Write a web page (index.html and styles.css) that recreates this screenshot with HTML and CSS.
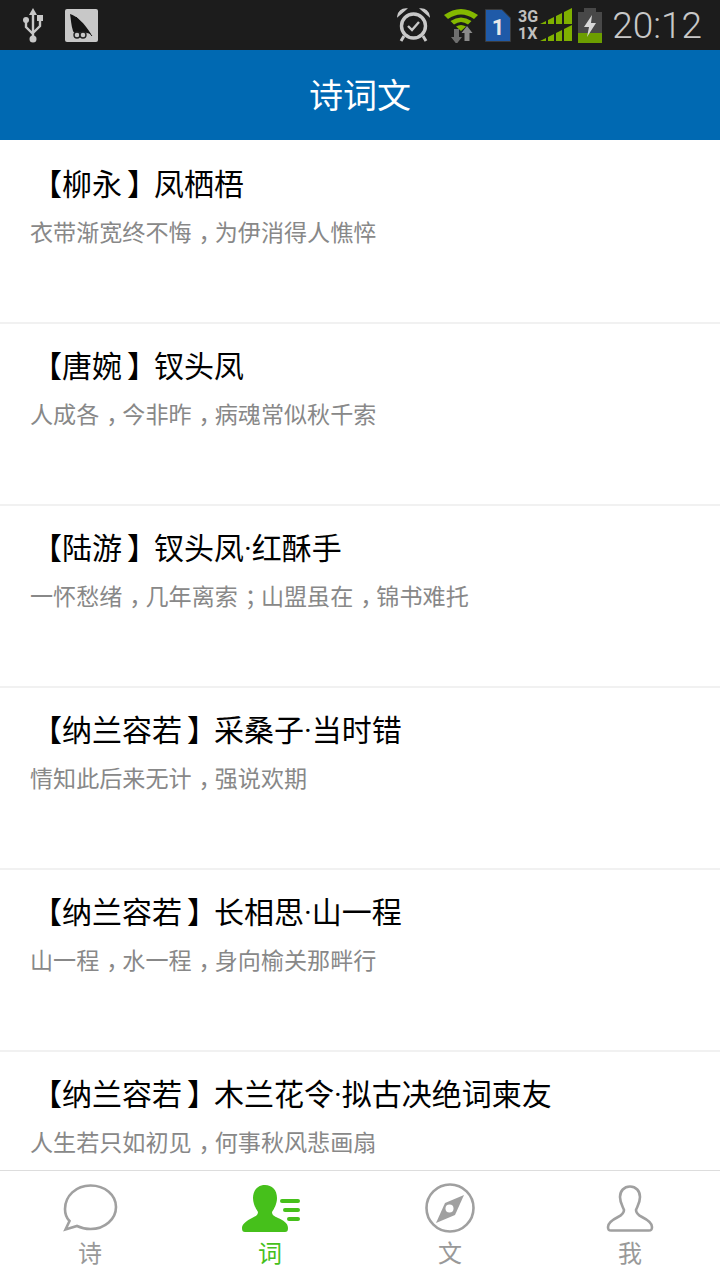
FILE: index.html
```html
<!DOCTYPE html>
<html lang="zh-CN">
<head>
    <meta charset="UTF-8">
    <meta name="viewport" content="width=device-width, initial-scale=1.0">
    <title>诗词文</title>
    <link rel="stylesheet" href="styles.css">
</head>
<body>
<div class="phone">

    <!-- Status bar -->
    <div class="status-bar">
        <div class="status-left">
            <svg class="icon-usb" width="24" height="36" viewBox="0 0 24 36">
                <path d="M11 1l-4 7h8z" fill="#c8c8c8"/>
                <path d="M11 7v25M4 13v7l7 7M18 11v8l-7 7" fill="none" stroke="#c8c8c8" stroke-width="2.4"/>
                <circle cx="11" cy="32" r="3.5" fill="#c8c8c8"/>
                <circle cx="4" cy="13" r="3" fill="#c8c8c8"/>
                <rect x="15" y="8" width="6" height="6" fill="#c8c8c8"/>
            </svg>
            <svg class="icon-note" width="33" height="33" viewBox="0 0 33 33">
                <rect width="33" height="33" rx="2" fill="#c8c8c8"/>
                <path d="M5 5C12 7 19 14 26 25L18 23C14 24 9 25 8 22C6 16 6 10 5 5Z" fill="#151515"/>
                <path d="M11 8L27 27" stroke="#151515" stroke-width="1"/>
                <circle cx="12" cy="26" r="3" fill="#c8c8c8" stroke="#222" stroke-width="1.4"/>
                <circle cx="18" cy="26" r="3" fill="#c8c8c8" stroke="#222" stroke-width="1.4"/>
            </svg>
        </div>
        <div class="status-right">
            <svg class="icon-alarm" width="33" height="35" viewBox="0 0 33 35">
                <circle cx="16.500" cy="18" r="12" fill="none" stroke="#c8c8c8" stroke-width="3.4"/>
                <path d="M1 8C2 3 5 1 9 1zM32 8C31 3 28 1 24 1z" fill="#c8c8c8" stroke="#c8c8c8" stroke-width="1.500"/>
                <path d="M11 18l4 4 7-8" fill="none" stroke="#c8c8c8" stroke-width="2.400"/>
                <path d="M7 28l-3 5M26 28l3 5" stroke="#c8c8c8" stroke-width="3"/>
            </svg>
            <svg class="icon-wifi" width="36" height="36" viewBox="0 0 36 36">
                <path d="M0 8Q17 -4 34 8L30 12Q17 3 4 12Z" fill="#84b800"/>
                <path d="M6.500 14Q17 7 27.500 14L24 17.500Q17 12.500 10 17.500Z" fill="#84b800"/>
                <path d="M12 19.500Q17 16.500 22 19.500L17 24Z" fill="#84b800"/>
                <path d="M10 22h5v8h3l-5.500 7-5.500-7h3z" fill="#6f6f6f"/>
                <path d="M23 19l5.500 7h-3v8h-5v-8h-3z" fill="#8a8a8a"/>
            </svg>
            <svg class="icon-sim" width="26" height="33" viewBox="0 0 26 33">
                <path d="M0.500 0.500H17L25.500 9V32.500H0.500z" fill="#1f5aa8" stroke="#3b3b3b"/>
                <text x="13" y="26" class="sim-num">1</text>
            </svg>
            <div class="net-type"><span>3G</span><span>1X</span></div>
            <svg class="icon-signal" width="32" height="34" viewBox="0 0 32 34">
                <path d="M0 16L6 13V16zM8 12L14 9V16H8zM16 8L22 5V16H16zM24 4L32 0V16H24z" fill="#7fb000"/>
                <path d="M0 33L6 30V33zM8 29L14 26V33H8zM16 25L22 22V33H16zM24 21L32 17V33H24z" fill="#7fb000"/>
            </svg>
            <svg class="icon-battery" width="24" height="35" viewBox="0 0 24 35">
                <rect x="6" y="0" width="12" height="4" fill="#484848"/>
                <rect x="0" y="4" width="24" height="21" fill="#484848"/>
                <rect x="0" y="25" width="24" height="10" fill="#6c9e00"/>
                <path d="M14 7L6 19H11L9 29L18 15H13z" fill="#d8d8d8"/>
            </svg>
            <span class="clock">20:12</span>
        </div>
    </div>

    <!-- Header -->
    <div class="header">诗词文</div>

    <!-- Poem list -->
    <div class="poem-list">
        <div class="poem">
            <h3><span class="bracket">【</span>柳永<span class="bracket-end">】</span>凤栖梧</h3>
            <p>衣带渐宽终不悔<span class="mark">，</span>为伊消得人憔悴</p>
        </div>
        <div class="poem">
            <h3><span class="bracket">【</span>唐婉<span class="bracket-end">】</span>钗头凤</h3>
            <p>人成各<span class="mark">，</span>今非昨<span class="mark">，</span>病魂常似秋千索</p>
        </div>
        <div class="poem">
            <h3><span class="bracket">【</span>陆游<span class="bracket-end">】</span>钗头凤·红酥手</h3>
            <p>一怀愁绪<span class="mark">，</span>几年离索<span class="mark">；</span>山盟虽在<span class="mark">，</span>锦书难托</p>
        </div>
        <div class="poem">
            <h3><span class="bracket">【</span>纳兰容若<span class="bracket-end">】</span>采桑子·当时错</h3>
            <p>情知此后来无计<span class="mark">，</span>强说欢期</p>
        </div>
        <div class="poem">
            <h3><span class="bracket">【</span>纳兰容若<span class="bracket-end">】</span>长相思·山一程</h3>
            <p>山一程<span class="mark">，</span>水一程<span class="mark">，</span>身向榆关那畔行</p>
        </div>
        <div class="poem">
            <h3><span class="bracket">【</span>纳兰容若<span class="bracket-end">】</span>木兰花令·拟古决绝词柬友</h3>
            <p>人生若只如初见<span class="mark">，</span>何事秋风悲画扇</p>
        </div>
    </div>

    <!-- Tab bar -->
    <div class="tab-bar">
        <div class="tab">
            <svg width="60" height="52" viewBox="0 0 60 52">
                <path d="M5.500 47.500L9.500 39C6 35.500 5 31 5 27C5 14 16 3.500 30.500 3.500C45 3.500 56 13 56 25C56 37 45 47 30.500 47C25 47 21 46 17 44Z" fill="none" stroke="#a0a0a0" stroke-width="2.600"/>
            </svg>
            <span>诗</span>
        </div>
        <div class="tab active">
            <svg width="60" height="52" viewBox="0 0 60 52">
                <path d="M25 3C32 3 37 8 37 16C37 22 34 27 32 30C32 33 34 34 38 36C43 38 48 41 48 46C48 49 47 50 45 50L5 50C3 50 2 49 2 46C2 42 7 38.500 12 36C16 34 18 33 18 30C16 27 13 22 13 16C13 8 18 3 25 3Z" fill="#46c01b"/>
                <rect x="40" y="17" width="20" height="4" rx="2" fill="#46c01b"/>
                <rect x="43" y="26" width="17" height="4" rx="2" fill="#46c01b"/>
                <rect x="47" y="35" width="13" height="4" rx="2" fill="#46c01b"/>
            </svg>
            <span>词</span>
        </div>
        <div class="tab">
            <svg width="60" height="52" viewBox="0 0 60 52">
                <circle cx="30" cy="26" r="23.500" fill="none" stroke="#a0a0a0" stroke-width="2.600"/>
                <path d="M44 13L35 33L16 41L25 21Z" fill="#a0a0a0"/>
                <circle cx="29.500" cy="26.500" r="4" fill="#fff"/>
            </svg>
            <span>文</span>
        </div>
        <div class="tab">
            <svg width="60" height="52" viewBox="0 0 60 52">
                <path d="M30 4.500C36 4.500 40 9 40 15C40 21 37 25 36 28C36 31 38 33 42 35C47 37.500 52 41 52 45C52 48 51 48.500 49 48.500L11 48.500C9 48.500 8 48 8 45C8 41 13 37.500 18 35C22 33 24 31 24 28C23 25 20 21 20 15C20 9 24 4.500 30 4.500Z" fill="none" stroke="#a0a0a0" stroke-width="2.600"/>
            </svg>
            <span>我</span>
        </div>
    </div>

</div>
</body>
</html>
```

FILE: styles.css
```css
/* General Styles */
body {
    margin: 0;
    padding: 0;
    background-color: #ffffff;
    font-family: Roboto, "Noto Sans CJK SC", sans-serif;
}

.phone {
    display: flex;
    flex-direction: column;
    width: 720px;
    height: 1280px;
    overflow: hidden;
}

/* Status bar */
.status-bar {
    display: flex;
    flex: none;
    justify-content: space-between;
    align-items: center;
    height: 50px;
    padding: 0 18px 0 22px;
    box-sizing: border-box;
    background-color: #1c1c1c;
}

.status-left,
.status-right {
    display: flex;
    align-items: center;
}

.icon-note {
    margin-left: 19px;
}

.icon-wifi {
    margin-left: 14px;
}

.icon-sim {
    margin-left: 5px;
}

.sim-num {
    font-size: 22px;
    font-weight: 700;
    fill: #e8e8e8;
    text-anchor: middle;
}

.net-type {
    display: flex;
    flex-direction: column;
    margin-left: 7px;
    color: #c0c0c0;
    font-size: 16px;
    font-weight: 700;
    line-height: 17px;
}

.icon-signal {
    margin-left: 2px;
}

.icon-battery {
    margin-left: 6px;
}

.clock {
    margin-left: 10px;
    color: #c8c8c8;
    font-size: 37px;
    font-weight: 300;
}

/* Header */
.header {
    flex: none;
    height: 90px;
    padding-top: 2px;
    box-sizing: border-box;
    background-color: #0069b2;
    color: #ffffff;
    font-size: 34px;
    line-height: 88px;
    text-align: center;
}

/* Poem list */
.poem-list {
    flex: 1;
    padding-top: 2px;
    overflow: hidden;
}

.poem {
    height: 182px;
    padding: 23px 30px 0;
    box-sizing: border-box;
    border-bottom: 2px solid #f1f1f1;
}

.poem h3 {
    margin: 0;
    color: #000000;
    font-size: 30px;
    font-weight: 400;
    line-height: 40px;
}

.bracket {
    padding-left: 2px;
}

.bracket-end {
    padding: 0 12px 0 5px;
    font-feature-settings: "halt";
}

.poem p {
    margin: 14px 0 0;
    color: #888888;
    font-size: 23.100px;
    line-height: 30px;
}

/* Punctuation sits in the middle of its cell, halt keeps its box half wide */
.mark {
    padding: 0 0.2em 0 0.3em;
    font-feature-settings: "halt";
}

/* Tab bar */
.tab-bar {
    display: flex;
    flex: none;
    height: 110px;
    box-sizing: border-box;
    border-top: 1px solid #dddddd;
    background-color: #ffffff;
}

.tab {
    display: flex;
    flex: 1;
    flex-direction: column;
    align-items: center;
    padding-top: 11px;
    color: #999999;
    font-size: 24px;
    line-height: 40px;
}

.tab.active {
    color: #46c01b;
}
```
